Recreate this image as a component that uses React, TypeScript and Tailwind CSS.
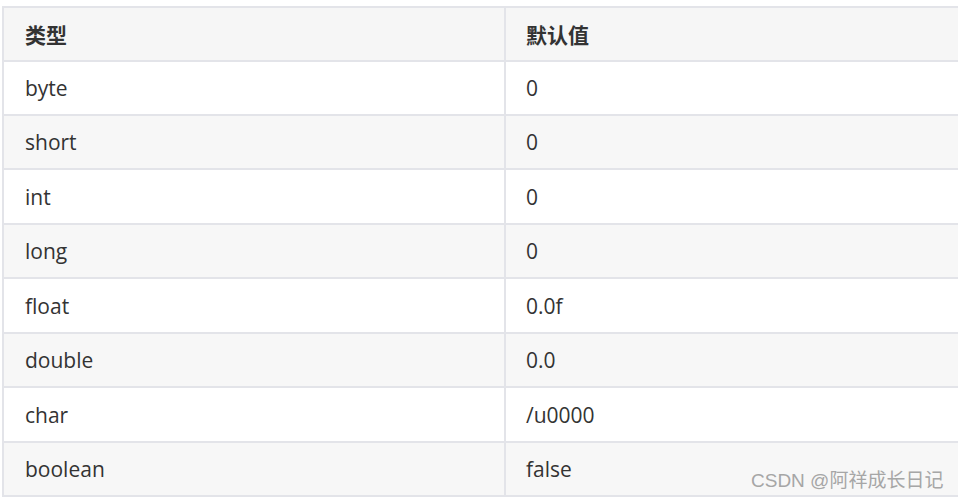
import React from "react";

const rows: { t: string; v: string; h: number }[] = [
  { t: "byte", v: "0", h: 52 },
  { t: "short", v: "0", h: 52 },
  { t: "int", v: "0", h: 53 },
  { t: "long", v: "0", h: 52 },
  { t: "float", v: "0.0f", h: 53 },
  { t: "double", v: "0.0", h: 52 },
  { t: "char", v: "/u0000", h: 53 },
  { t: "boolean", v: "false", h: 52 },
];

export default function App() {
  return (
    <div className="relative w-[958px] h-[499px] overflow-hidden bg-white pt-[6px] pl-[2px]">
      <div
        className="w-[1010px] border-2 border-[#e3e4e9] text-[21px] text-[#333333]"
        style={{ fontFamily: '"Open Sans", "Noto Sans CJK SC", sans-serif' }}
      >
        <div className="flex h-[52px] bg-[#f6f6f6] font-bold items-center">
          <div className="w-[500px] h-full flex items-center pl-[21px] pt-[3px]">类型</div>
          <div className="w-[2px] h-full bg-[#e3e4e9]" />
          <div className="flex-1 h-full flex items-center pl-[20px] pt-[3px]">默认值</div>
        </div>
        {rows.map((r, i) => (
          <div
            key={r.t}
            className={
              "flex border-t-2 border-[#e3e4e9] items-center " +
              (i % 2 === 1 ? "bg-[#f7f7f7]" : "bg-white")
            }
            style={{ height: r.h + 2 }}
          >
            <div className="w-[500px] h-full flex items-center pl-[21px] pt-[2px]">{r.t}</div>
            <div className="w-[2px] h-full bg-[#e3e4e9]" />
            <div className="flex-1 h-full flex items-center pl-[20px] pt-[2px]">{r.v}</div>
          </div>
        ))}
      </div>
      <div
        className="absolute left-[751px] top-[471px] text-[19px] text-[#a6a6a6] leading-none"
        style={{ fontFamily: '"Liberation Sans", "Noto Sans CJK SC", sans-serif' }}
      >
        CSDN @阿祥成长日记
      </div>
    </div>
  );
}
